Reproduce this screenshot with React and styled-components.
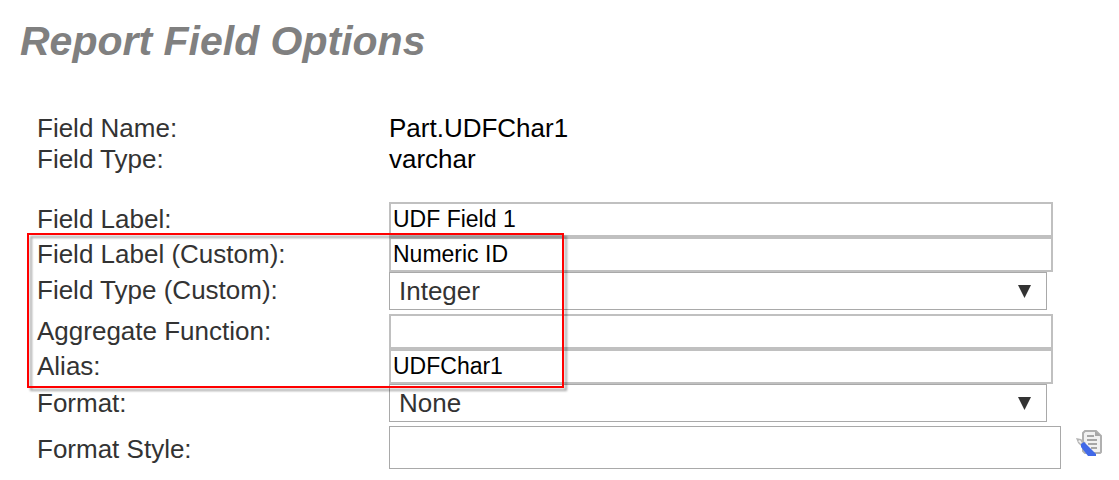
import React, { useState } from "react";
import styled, { createGlobalStyle } from "styled-components";

const GlobalStyle = createGlobalStyle`
  body {
    margin: 0;
    background: #ffffff;
    font-family: "Liberation Sans", Arial, sans-serif;
    font-size: 26px;
  }
  * {
    box-sizing: border-box;
  }
`;
const Page = styled.main`
  padding: 17px 14px 6px 20px;
`;
const Title = styled.h1`
  margin: 0;
  color: #808080;
  font-size: 41px;
  font-style: italic;
  line-height: 48px;
`;
const Form = styled.form`
  margin-top: 48px;
  padding-left: 17px;
`;
const Details = styled.dl`
  display: grid;
  grid-template-columns: 352px 1fr;
  margin: 0 0 27px;
  line-height: 31px;
`;
const Term = styled.dt`
  color: #333333;
`;
const Value = styled.dd`
  margin: 0;
  color: #000000;
`;
const Row = styled.div`
  display: grid;
  grid-template-columns: 352px 1fr;
  align-items: start;
  padding-right: ${(props) => props.$end || 52}px;
  padding-bottom: ${(props) => props.$gap || 0}px;
`;
const Label = styled.label`
  color: #333333;
  line-height: ${(props) => props.$line || 35}px;
`;
const TextBox = styled.input`
  width: 100%;
  height: 35px;
  padding: 0 2px;
  border: 2px solid #c0c0c0;
  border-radius: 0;
  background: #ffffff;
  color: #000000;
  font-family: inherit;
  font-size: 23px;
  outline: none;
`;
const StyleBox = styled(TextBox)`
  flex: 1;
  min-width: 0;
  height: 43px;
  border: 1px solid #a9a9a9;
`;
const StyleField = styled.div`
  display: flex;
  gap: 15px;
`;
const SelectContainer = styled.div`
  position: relative;
`;
const Select = styled.select`
  display: block;
  width: 100%;
  height: 38px;
  padding: 0 40px 0 9px;
  border: 1px solid #a9a9a9;
  border-radius: 0;
  background: #ffffff;
  color: #333333;
  font-family: inherit;
  font-size: 26px;
  appearance: none;
  outline: none;
`;
const Arrow = styled.svg`
  position: absolute;
  top: 13px;
  right: 16px;
  pointer-events: none;
`;
const Highlighted = styled.div`
  position: relative;
  z-index: 1;

  &::after {
    content: "";
    position: absolute;
    top: -4px;
    bottom: -4px;
    left: -10px;
    width: 537px;
    box-sizing: border-box;
    border: 2px solid #ff0000;
    filter: drop-shadow(3px 3px 1px rgba(0, 0, 0, 0.35));
    pointer-events: none;
  }
`;
const EditButton = styled.button`
  width: 26px;
  height: 26px;
  margin-top: 4px;
  padding: 0;
  border: 0;
  background: none;
  cursor: pointer;
`;

const EditIcon = () => (
  <svg width="26" height="26" viewBox="0 0 26 26" display="block">
    <path
      d="M9 1h11l5 5v16l-1 1H9l-2-2V3z"
      fill="#f1f1f1"
      stroke="#b0b0b0"
      strokeWidth="2"
    />
    <path d="M19 1v5h6z" fill="#a8a8a8" />
    <path
      d="M11 6h7M11 10h10M12 14h9M15 18h6"
      stroke="#a6a6a6"
      strokeWidth="2"
    />
    <path d="M0 8l5 1 5 4-4 4-4-4z" fill="#b4b4b4" />
    <path d="M2 11l2-1 2 3-1 1z" fill="#f2f2f2" />
    <path d="M8 12L20 24v2h-8L5 17v-3z" fill="#4169e8" />
  </svg>
);

const TextRow = ({ id, label, value, onChange }) => (
  <Row>
    <Label htmlFor={id}>{label}</Label>
    <TextBox id={id} type="text" value={value} onChange={onChange} />
  </Row>
);

const SelectRow = ({ id, label, line, value, options, onChange }) => (
  <Row $end={58} $gap={4}>
    <Label htmlFor={id} $line={line}>
      {label}
    </Label>
    <SelectContainer>
      <Select id={id} value={value} onChange={onChange}>
        {options.map((option) => (
          <option key={option}>{option}</option>
        ))}
      </Select>
      <Arrow width="13" height="13" viewBox="0 0 13 13">
        <path d="M0 0h13L6.5 13z" fill="#333333" />
      </Arrow>
    </SelectContainer>
  </Row>
);

const App = () => {
  const [field, setField] = useState({
    label: "UDF Field 1",
    customLabel: "Numeric ID",
    customType: "Integer",
    aggregate: "",
    alias: "UDFChar1",
    format: "None",
    formatStyle: "",
  });

  const bind = (name) => ({
    id: name,
    value: field[name],
    onChange: (e) => setField({ ...field, [name]: e.target.value }),
  });

  return (
    <Page>
      <GlobalStyle />
      <Title>Report Field Options</Title>
      <Form onSubmit={(e) => e.preventDefault()}>
        <Details>
          <Term>Field Name:</Term>
          <Value>Part.UDFChar1</Value>
          <Term>Field Type:</Term>
          <Value>varchar</Value>
        </Details>
        <TextRow label="Field Label:" {...bind("label")} />
        <Highlighted>
          <TextRow label="Field Label (Custom):" {...bind("customLabel")} />
          <SelectRow
            label="Field Type (Custom):"
            line={36}
            options={["Integer"]}
            {...bind("customType")}
          />
          <TextRow label="Aggregate Function:" {...bind("aggregate")} />
          <TextRow label="Alias:" {...bind("alias")} />
        </Highlighted>
        <SelectRow
          label="Format:"
          line={38}
          options={["None"]}
          {...bind("format")}
        />
        <Row $end={3}>
          <Label htmlFor="formatStyle" $line={46}>
            Format Style:
          </Label>
          <StyleField>
            <StyleBox type="text" {...bind("formatStyle")} />
            <EditButton type="button" aria-label="Edit format style">
              <EditIcon />
            </EditButton>
          </StyleField>
        </Row>
      </Form>
    </Page>
  );
};

export default App;
